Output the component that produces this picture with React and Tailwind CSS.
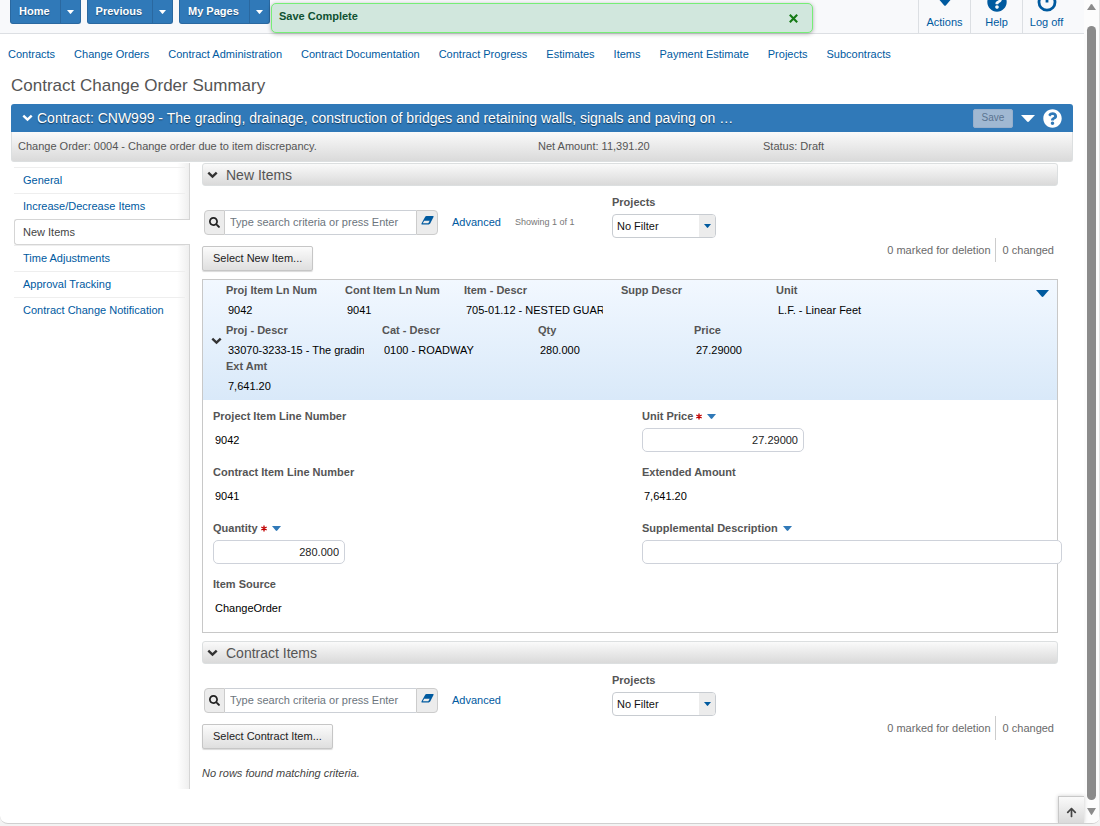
import { FaSearch, FaQuestionCircle, FaArrowUp } from 'react-icons/fa';

const menuButtons = ['Home', 'Previous', 'My Pages'];

const quickLinks = [
  'Contracts',
  'Change Orders',
  'Contract Administration',
  'Contract Documentation',
  'Contract Progress',
  'Estimates',
  'Items',
  'Payment Estimate',
  'Projects',
  'Subcontracts',
];

const tabs = [
  'General',
  'Increase/Decrease Items',
  'New Items',
  'Time Adjustments',
  'Approval Tracking',
  'Contract Change Notification',
];

const Triangle = ({ className }) => (
  <svg viewBox="0 0 12 6" preserveAspectRatio="none" className={className} aria-hidden="true">
    <path d="M0 0H12L7 5.4Q6 6.4 5 5.4Z" fill="currentColor" />
  </svg>
);

const Chevron = ({ className }) => (
  <svg viewBox="0 0 11 8" className={`h-2 w-[11px] shrink-0 ${className}`} aria-hidden="true">
    <path d="M1.3 1.6L5.5 5.6L9.7 1.6" fill="none" stroke="currentColor" strokeWidth="2.4" />
  </svg>
);

const Eraser = () => (
  <svg viewBox="0 0 13 9" className="h-[9px] w-[13px]" aria-hidden="true">
    <path fill="currentColor" fillRule="evenodd" d="M5.5 0H12Q13 0 12.5 1L9.2 7.6Q8.7 8.4 7.8 8.4H1Q0 8.4 .5 7.4L4.2 .7Q4.6 0 5.5 0ZM3.2 4.8L1.8 7.3H7.3L8.7 4.8Z" />
  </svg>
);

const Power = () => (
  <svg viewBox="0 0 20 20" className="h-5 w-5 shrink-0" aria-hidden="true">
    <path d="M5.2 3.8A8 8 0 1 0 14.8 3.8M10 1V10.5" fill="none" stroke="currentColor" strokeWidth="2.8" />
  </svg>
);

const TopBar = () => (
  <header className="relative flex h-[34px] items-start justify-between border-b border-[#dcdfe3] bg-[#f8f9fb]">
    <div className="flex gap-[6px] pl-[10px]">
      {menuButtons.map((name) => (
        <div key={name} className="flex h-6 rounded-b-[3px] border border-t-0 border-[#2a68a0] bg-[#3079b8] font-bold text-white">
          <button type="button" className="pr-[10px] pl-2 [text-shadow:0_1px_1px_#1b4a75]">{name}</button>
          <button type="button" aria-label={`${name} menu`} className="flex w-5 items-center justify-center border-l border-[#2a68a0]">
            <Triangle className="h-1 w-[7px]" />
          </button>
        </div>
      ))}
    </div>

    <div className="flex h-full overflow-hidden text-[#005a9f]">
      <button type="button" className="flex w-[52px] flex-col items-center justify-end border-l border-[#dcdfe3] pb-[3px]">
        <svg viewBox="0 0 16 16" className="h-4 w-4 shrink-0" aria-hidden="true">
          <path d="M5 0H11V7H16L9 15.3Q8 16.4 7 15.3L0 7H5Z" fill="currentColor" />
        </svg>
        <span className="mt-2 leading-4">Actions</span>
      </button>
      <button type="button" className="flex w-[52px] flex-col items-center justify-end border-l border-[#dcdfe3] pb-[3px]">
        <FaQuestionCircle className="shrink-0 text-[20px]" />
        <span className="mt-[2px] leading-4">Help</span>
      </button>
      <button type="button" className="flex w-[62px] flex-col items-center justify-end border-l border-[#dcdfe3] pr-[14px] pb-[3px]">
        <Power />
        <span className="mt-[2px] leading-4 whitespace-nowrap">Log off</span>
      </button>
    </div>

    <div role="status" className="absolute top-[3px] left-[271px] flex h-[30px] w-[542px] items-start justify-between rounded-[5px] border border-[#76ee76] bg-[#d1e7dd] pt-1 pr-[14px] pl-[7px] shadow-[0_1px_4px_rgba(0,0,0,0.3)]">
      <span className="leading-4 font-bold text-[#0f5132]">Save Complete</span>
      <button type="button" aria-label="Close" className="mt-[6px] text-[#157a15]">
        <svg viewBox="0 0 9 9" className="h-[9px] w-[9px]" aria-hidden="true">
          <path d="M.8 .8L8.2 8.2M8.2 .8L.8 8.2" stroke="currentColor" strokeWidth="2.1" />
        </svg>
      </button>
    </div>
  </header>
);

const SectionHeader = ({ children }) => (
  <h2 className="flex h-[23px] items-center gap-2 rounded-[3px] border border-[#dcdfe0] bg-linear-to-b from-[#fafafa] to-[#dadada] pl-1 text-[14px] leading-5 text-[#555]">
    <Chevron className="text-[#333]" />
    {children}
  </h2>
);

const SearchArea = ({ id, action, showing }) => (
  <div className="flex h-[93px] justify-between">
    <div className="flex">
      <div className="flex w-[410px] flex-col items-start pt-[24px]">
        <div className="flex h-[25px] items-stretch pl-[2px]">
          <button type="button" aria-label="Search" className="flex w-[21px] items-center justify-center rounded-l-[4px] border border-[#ccc] bg-[#ececec] text-[#222]">
            <FaSearch className="text-[11px]" />
          </button>
          <input
            type="text"
            aria-label="Search criteria"
            placeholder="Type search criteria or press Enter"
            className="w-[191px] border-y border-[#ccd0d6] bg-white px-[5px] placeholder:text-[#6c757d]"
          />
          <button type="button" aria-label="Clear" className="flex w-[22px] justify-center rounded-r-[4px] border border-[#ccc] bg-[#ececec] pt-[5px] text-[#005a9f]">
            <Eraser />
          </button>
          <a href="#advanced" className="ml-[14px] self-center text-[#005a9f]">Advanced</a>
          {showing && <span className="ml-[14px] self-center text-[9px] text-[#777]">{showing}</span>}
        </div>
        <button type="button" className="mt-[11px] h-[25px] rounded-[2px] border border-[#c6c6c6] bg-linear-to-b from-[#fbfbfb] to-[#dfdfdf] px-[10px] text-[#222] shadow-[0_1px_1px_rgba(0,0,0,0.15)]">
          {action}
        </button>
      </div>
      <div className="flex flex-col pt-2">
        <label htmlFor={id} className="leading-4 font-bold text-[#555]">Projects</label>
        <div className="relative mt-1 h-6 w-[104px]">
          <select id={id} className="h-full w-full appearance-none rounded-[4px] border border-[#c8ccd1] bg-white pl-1 text-[#111]">
            <option>No Filter</option>
          </select>
          <span className="pointer-events-none absolute inset-y-px right-px flex w-4 items-center justify-center rounded-r-[3px] bg-[#ececec] text-[#005a9f]">
            <Triangle className="h-1 w-[7px]" />
          </span>
        </div>
      </div>
    </div>
    <div className="mt-[52px] mr-1 flex h-6 items-center text-[#6a6a6a]">
      <span className="flex h-full items-center border-r border-[#ccc] pr-1">0 marked for deletion</span>
      <span className="pl-[7px]">0 changed</span>
    </div>
  </div>
);

const Cell = ({ label, value, width }) => (
  <div className={width}>
    <div className="leading-4 font-bold text-[#555]">{label}</div>
    <div className="mt-1 mr-[18px] ml-[2px] h-4 overflow-hidden leading-4 whitespace-nowrap text-black">{value}</div>
  </div>
);

const ReadOnly = ({ label, value }) => (
  <div>
    <div className="leading-4 font-bold text-[#555]">{label}</div>
    <div className="mt-1 h-6 pl-[2px] leading-6 text-black">{value}</div>
  </div>
);

const Field = ({ id, label, required, value, width, align }) => (
  <div>
    <label htmlFor={id} className="flex items-center leading-4 font-bold text-[#555]">
      {label}
      {required && (
        <svg viewBox="0 0 8 8" className="ml-[3px] h-[7px] w-[6px] text-[#c00000]" aria-label="required">
          <path stroke="currentColor" strokeWidth="1.8" d="M4 0V8M.4 2L7.6 6M.4 6L7.6 2" />
        </svg>
      )}
      <Triangle className="ml-[5px] h-[5px] w-[9px] text-[#3079b8]" />
    </label>
    <input
      id={id}
      type="text"
      defaultValue={value}
      className={`mt-1 block h-6 rounded-[5px] border border-[#ced2da] bg-white px-[5px] text-[#222] ${width} ${align}`}
    />
  </div>
);

const ItemPanel = () => (
  <div className="border border-[#c8c8c8]">
    <div className="flex h-[120px] items-start bg-linear-to-b from-[#f2f8ff] to-[#d9e9f9] pt-[2px]">
      <button type="button" aria-label="Collapse row" className="flex w-[23px] items-center self-stretch pl-2 text-[#333]">
        <Chevron />
      </button>
      <div className="flex-1">
        <div className="mb-1 flex">
          <Cell label="Proj Item Ln Num" value="9042" width="w-[119px]" />
          <Cell label="Cont Item Ln Num" value="9041" width="w-[119px]" />
          <Cell label="Item - Descr" value="705-01.12 - NESTED GUAR" width="w-[157px]" />
          <Cell label="Supp Descr" value="" width="w-[155px]" />
          <Cell label="Unit" value="L.F. - Linear Feet" width="w-[156px]" />
        </div>
        <div className="flex">
          <Cell label="Proj - Descr" value="33070-3233-15 - The gradin" width="w-[156px]" />
          <Cell label="Cat - Descr" value="0100 - ROADWAY" width="w-[156px]" />
          <Cell label="Qty" value="280.000" width="w-[156px]" />
          <Cell label="Price" value="27.29000" width="w-[156px]" />
        </div>
        <Cell label="Ext Amt" value="7,641.20" width="w-[156px]" />
      </div>
      <button type="button" aria-label="Row actions" className="mt-2 mr-2 text-[#005a9f]">
        <Triangle className="h-[7px] w-[13px]" />
      </button>
    </div>
    <div className="grid grid-cols-2 gap-x-[14px] gap-y-3 pt-2 pb-3 pl-[10px]">
      <ReadOnly label="Project Item Line Number" value="9042" />
      <Field id="unit-price" label="Unit Price" required value="27.29000" width="w-[162px]" align="text-right" />
      <ReadOnly label="Contract Item Line Number" value="9041" />
      <ReadOnly label="Extended Amount" value="7,641.20" />
      <Field id="quantity" label="Quantity" required value="280.000" width="w-[132px]" align="text-right" />
      <Field id="supp-descr" label="Supplemental Description" value="" width="w-[calc(100%+5px)]" align="text-left" />
      <ReadOnly label="Item Source" value="ChangeOrder" />
    </div>
  </div>
);

const Sidebar = () => (
  <nav className="ml-[3px] w-[176px] shrink-0 border-r border-[#d5d5d5] bg-[linear-gradient(to_left,#efefef,#fff_12px)] pt-1">
    {tabs.map((tab) =>
      tab === 'New Items' ? (
        <a key={tab} href="#new-items" aria-current="page" className="-mr-px flex h-[26px] items-center rounded-l-[3px] border border-r-0 border-[#d5d5d5] bg-white pl-2 text-[#444]">
          {tab}
        </a>
      ) : (
        <a key={tab} href="#tab" className="mr-1 flex h-[26px] items-center border-t border-[#eee] pl-[9px] text-[#005a9f]">
          {tab}
        </a>
      )
    )}
  </nav>
);

const Scrollbar = () => (
  <div className="flex w-4 shrink-0 flex-col items-center border-r border-[#e2e2e2] bg-[#fcfcfc] pt-1 pb-2">
    <Triangle className="h-[6px] w-[9px] rotate-180 text-[#8b8b8b]" />
    <div className="mt-4 w-[9px] flex-1 rounded-full bg-[#8b8b8b]" />
    <Triangle className="mt-2 h-[7px] w-[9px] text-[#8b8b8b]" />
  </div>
);

const App = () => {
  return (
    <div className="flex min-h-screen flex-col bg-[#f3f3f3] pb-[2px] font-['Liberation_Sans',Arial,sans-serif] text-[11px]">
      <div className="flex flex-1 overflow-hidden rounded-b-lg border-b border-[#d0d0d0] bg-white">
        <div className="relative min-w-0 flex-1">
          <TopBar />

          <nav className="flex gap-[19px] pt-3 pl-2 leading-4 whitespace-nowrap text-[#005a9f]">
            {quickLinks.map((link) => (
              <a key={link} href="#link">{link}</a>
            ))}
          </nav>

          <div className="pr-[11px] pl-[11px]">
            <h1 className="pt-3 pb-[6px] text-[17px] leading-6 text-[#555]">Contract Change Order Summary</h1>

            <div className="flex h-7 items-center rounded-t-[3px] bg-[#3079b8] pr-[11px] pl-[11px] text-white">
              <Chevron className="mr-[4px]" />
              <span className="flex-1 text-[14px] [text-shadow:0_1px_1px_#153a5c]">
                Contract: CNW999 - The grading, drainage, construction of bridges and retaining walls, signals and paving on …
              </span>
              <button type="button" disabled className="h-[19px] w-10 rounded-[2px] border border-[#96aecb] bg-[#a0b8d2] text-[10px] leading-4 text-[#5a7390]">Save</button>
              <button type="button" aria-label="Actions" className="ml-2">
                <Triangle className="h-[7px] w-[14px]" />
              </button>
              <button type="button" aria-label="Help" className="ml-2 text-[19px]">
                <FaQuestionCircle />
              </button>
            </div>
            <div className="flex h-[30px] items-center rounded-b-[3px] border border-t-0 border-[#dcdfe0] bg-linear-to-b from-[#fafafa] to-[#dadada] pl-[6px] text-[#555]">
              <span className="w-[520px]">Change Order: 0004 - Change order due to item discrepancy.</span>
              <span className="w-[225px]">Net Amount: 11,391.20</span>
              <span>Status: Draft</span>
            </div>

            <div className="flex pt-px">
              <Sidebar />
              <main className="min-w-0 flex-1 pr-[15px] pb-2 pl-3">
                <SectionHeader>New Items</SectionHeader>
                <SearchArea id="projects-new" action="Select New Item..." showing="Showing 1 of 1" />
                <ItemPanel />
                <div className="pt-2">
                  <SectionHeader>Contract Items</SectionHeader>
                  <SearchArea id="projects-contract" action="Select Contract Item..." />
                </div>
                <p className="pt-2 leading-4 text-[#444] italic">No rows found matching criteria.</p>
              </main>
            </div>
          </div>

          <button type="button" aria-label="Back to top" className="absolute right-0 bottom-0 flex h-[27px] w-[26px] items-center justify-center border-t border-l border-[#c8c8c8] bg-linear-to-b from-[#fafafa] to-[#dadada] pt-1 text-[#444] shadow-[0_0_4px_rgba(0,0,0,0.2)]">
            <FaArrowUp className="text-[11px]" />
          </button>
        </div>
        <Scrollbar />
      </div>
    </div>
  );
};

export default App;
